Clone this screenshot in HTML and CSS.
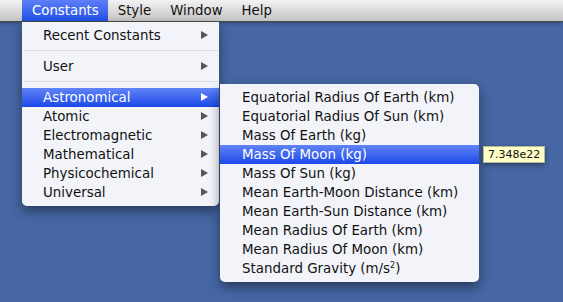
FILE: index.html
```html
<!DOCTYPE html>
<html lang="en">
<head>
  <meta charset="UTF-8" />
  <title>Constants</title>
  <link rel="stylesheet" href="styles.css">
</head>
<body>
  <div class="menubar">
    <span class="title active">Constants</span>
    <span class="title">Style</span>
    <span class="title">Window</span>
    <span class="title">Help</span>
  </div>

  <div class="menu main">
    <div class="item sub">Recent Constants</div>
    <div class="sep"></div>
    <div class="item sub">User</div>
    <div class="sep"></div>
    <div class="item sub selected">Astronomical</div>
    <div class="item sub">Atomic</div>
    <div class="item sub">Electromagnetic</div>
    <div class="item sub">Mathematical</div>
    <div class="item sub">Physicochemical</div>
    <div class="item sub">Universal</div>
  </div>

  <div class="menu submenu">
    <div class="item">Equatorial Radius Of Earth (km)</div>
    <div class="item">Equatorial Radius Of Sun (km)</div>
    <div class="item">Mass Of Earth (kg)</div>
    <div class="item selected">Mass Of Moon (kg)</div>
    <div class="item">Mass Of Sun (kg)</div>
    <div class="item">Mean Earth-Moon Distance (km)</div>
    <div class="item">Mean Earth-Sun Distance (km)</div>
    <div class="item">Mean Radius Of Earth (km)</div>
    <div class="item">Mean Radius Of Moon (km)</div>
    <div class="item">Standard Gravity (m/s<sup>2</sup>)</div>
  </div>

  <div class="tooltip">7.348e22</div>
</body>
</html>
```

FILE: styles.css
```css
body {
  margin: 0;
  width: 563px;
  height: 302px;
  overflow: hidden;
  background: #4667a4;
  font-family: "DejaVu Sans", sans-serif;
  font-size: 13.4px;
  color: #111;
  position: relative;
}
.menubar {
  height: 21px;
  display: flex;
  padding-left: 22px;
  background: linear-gradient(#f3f3f3, #c4c4c4);
  border-bottom: 1px solid #4a4a4a;
  box-shadow: 0 1px 4px rgba(0,0,0,0.35);
  position: relative;
  z-index: 1;
}
.title {
  padding: 0 9px 0 10px;
  line-height: 21px;
  font-size: 13.3px;
}
.title.active {
  color: #fff;
  background: linear-gradient(#5d7ef6, #2150e9);
}
.menu {
  position: absolute;
  background: rgba(246,247,251,0.98);
  padding: 4px 0;
  box-shadow: 0 5px 12px rgba(0,0,0,0.45);
}
.main {
  left: 22px;
  top: 22px;
  width: 197px;
  border-radius: 0 0 5px 5px;
  z-index: 2;
}
.submenu {
  left: 220px;
  top: 84px;
  width: 259px;
  border-radius: 0 5px 5px 5px;
  z-index: 3;
}
.item {
  height: 19px;
  line-height: 19px;
  padding-left: 21px;
  position: relative;
  white-space: nowrap;
}
.submenu .item {
  padding-left: 22px;
}
.item sup {
  font-size: 8px;
  vertical-align: 5px;
  line-height: 0;
}
.sub::after {
  content: "";
  position: absolute;
  right: 11px;
  top: 5px;
  border-left: 7px solid #555;
  border-top: 4.5px solid transparent;
  border-bottom: 4.5px solid transparent;
}
.selected {
  color: #fff;
  background: linear-gradient(#6284f7, #1b49e8);
}
.selected.sub::after {
  border-left-color: #fff;
}
.sep {
  height: 12px;
  position: relative;
}
.sep::before {
  content: "";
  position: absolute;
  left: 1px;
  right: 1px;
  top: 5px;
  border-top: 1px solid #dcdde2;
}
.tooltip {
  position: absolute;
  left: 483px;
  top: 146px;
  padding: 0 4px;
  height: 15px;
  line-height: 15px;
  font-size: 11px;
  background: #ffffc7;
  border: 1px solid #b8b89a;
  box-shadow: 0 2px 5px rgba(0,0,0,0.4);
  z-index: 4;
}
```
